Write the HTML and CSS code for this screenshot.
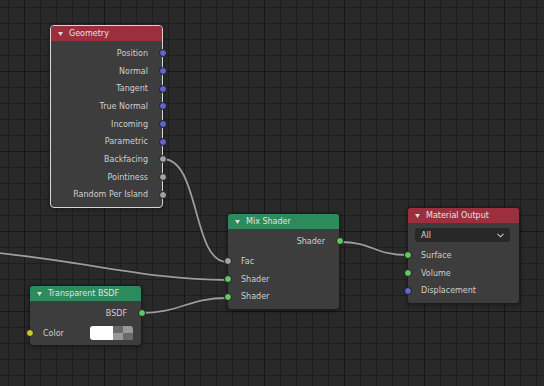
FILE: index.html
```html
<!DOCTYPE html>
<html lang="en">
<head>
  <meta charset="UTF-8">
  <title>Shader Editor</title>
  <link rel="stylesheet" href="styles.css">
</head>
<body>
  <div class="editor">
    <svg class="links" width="544" height="386" viewBox="0 0 544 386">
      <g class="wire-back">
        <path d="M163,159 C200,159 192,262 227,262"/>
        <path d="M-10,252 C90,262 150,280 227,280"/>
        <path d="M141,313 C180,313 188,298 227,298"/>
        <path d="M340,242 C374,242 373,255 407,255"/>
      </g>
      <g class="wire">
        <path d="M163,159 C200,159 192,262 227,262"/>
        <path d="M-10,252 C90,262 150,280 227,280"/>
        <path d="M141,313 C180,313 188,298 227,298"/>
        <path d="M340,242 C374,242 373,255 407,255"/>
      </g>
    </svg>

    <!-- Geometry -->
    <div class="node node-geometry active">
      <div class="node-header red">
        <svg class="collapse" width="5" height="4" viewBox="0 0 5 4"><polygon points="0,0 5,0 2.5,4"/></svg>
        <span>Geometry</span>
      </div>
      <div class="node-body">
        <div class="row out">Position<i class="socket vector"></i></div>
        <div class="row out">Normal<i class="socket vector"></i></div>
        <div class="row out">Tangent<i class="socket vector"></i></div>
        <div class="row out">True Normal<i class="socket vector"></i></div>
        <div class="row out">Incoming<i class="socket vector"></i></div>
        <div class="row out">Parametric<i class="socket vector"></i></div>
        <div class="row out">Backfacing<i class="socket float"></i></div>
        <div class="row out">Pointiness<i class="socket float"></i></div>
        <div class="row out">Random Per Island<i class="socket float"></i></div>
      </div>
    </div>

    <!-- Mix Shader -->
    <div class="node node-mix">
      <div class="node-header green">
        <svg class="collapse" width="5" height="4" viewBox="0 0 5 4"><polygon points="0,0 5,0 2.5,4"/></svg>
        <span>Mix Shader</span>
      </div>
      <div class="node-body">
        <div class="row out">Shader<i class="socket shader"></i></div>
        <div class="row in gap">Fac<i class="socket float"></i></div>
        <div class="row in">Shader<i class="socket shader"></i></div>
        <div class="row in">Shader<i class="socket shader"></i></div>
      </div>
    </div>

    <!-- Material Output -->
    <div class="node node-output">
      <div class="node-header red">
        <svg class="collapse" width="5" height="4" viewBox="0 0 5 4"><polygon points="0,0 5,0 2.5,4"/></svg>
        <span>Material Output</span>
      </div>
      <div class="node-body">
        <div class="row">
          <div class="dropdown">
            <span>All</span>
            <svg width="7" height="5" viewBox="0 0 7 5"><polyline points="0.5,0.8 3.5,3.8 6.5,0.8"/></svg>
          </div>
        </div>
        <div class="row in gap">Surface<i class="socket shader"></i></div>
        <div class="row in">Volume<i class="socket shader"></i></div>
        <div class="row in">Displacement<i class="socket vector"></i></div>
      </div>
    </div>

    <!-- Transparent BSDF -->
    <div class="node node-transparent">
      <div class="node-header green">
        <svg class="collapse" width="5" height="4" viewBox="0 0 5 4"><polygon points="0,0 5,0 2.5,4"/></svg>
        <span>Transparent BSDF</span>
      </div>
      <div class="node-body">
        <div class="row out">BSDF<i class="socket shader"></i></div>
        <div class="row in gap">Color<i class="socket color"></i>
          <div class="swatch"><span class="swatch-solid"></span><span class="swatch-alpha"></span></div>
        </div>
      </div>
    </div>
  </div>
</body>
</html>
```

FILE: styles.css
```css
body {
    margin: 0;
    background: #282828;
    font-family: "DejaVu Sans", sans-serif;
}

/* node editor canvas with grid */
.editor {
    position: relative;
    width: 544px;
    height: 386px;
    overflow: hidden;
    background-color: #292929;
    background-image:
        linear-gradient(to right, #171717 1px, transparent 1px),
        linear-gradient(to bottom, #171717 1px, transparent 1px),
        linear-gradient(to right, #1e1e1e 1px, transparent 1px),
        linear-gradient(to bottom, #1e1e1e 1px, transparent 1px);
    background-size: 80px 80px, 80px 80px, 16px 16px, 16px 16px;
    background-position: 24px 0, 0 71px, 8px 0, 0 7px;
}

.links {
    position: absolute;
    left: 0;
    top: 0;
}

.links path {
    fill: none;
}

.wire-back path {
    stroke: #232323;
    stroke-width: 3.5;
}

.wire path {
    stroke: #9c9c9c;
    stroke-width: 1.8;
}

/* nodes */
.node {
    position: absolute;
    width: 113px;
    box-sizing: border-box;
    background: #3d3d3d;
    border: 1px solid #1c1c1c;
    border-radius: 4px;
    box-shadow: 0 1px 4px rgba(0, 0, 0, 0.45);
    font-size: 8px;
    color: #cfcfcf;
}

.node.active {
    border-color: #d6d6d6;
}

.node-geometry {
    left: 50px;
    top: 25px;
}

.node-mix {
    left: 227px;
    top: 213px;
}

.node-output {
    left: 407px;
    top: 207px;
}

.node-transparent {
    left: 29px;
    top: 285px;
}

.node-header {
    height: 15px;
    display: flex;
    align-items: center;
    gap: 6px;
    padding-left: 7px;
    border-radius: 3px 3px 0 0;
    color: #e2e2e2;
}

.node-header.red {
    background: #9d2f3d;
}

.node-header.green {
    background: #2c8a5b;
}

.collapse polygon {
    fill: #dddddd;
}

.node-body {
    padding: 3.5px 0 3px;
}

.row {
    position: relative;
    height: 17.7px;
    display: flex;
    align-items: center;
}

.row.out {
    justify-content: flex-end;
    padding-right: 14px;
}

.row.in {
    padding-left: 13px;
}

.row.gap {
    margin-top: 2.3px;
}

/* sockets sit on the node edge */
.socket {
    position: absolute;
    top: calc(50% - 4px);
    width: 8px;
    height: 8px;
    box-sizing: border-box;
    border-radius: 50%;
    border: 1px solid #1e1e1e;
}

.row.out .socket {
    right: -4.5px;
}

.row.in .socket {
    left: -4.5px;
}

.socket.vector {
    background: #6464cc;
}

.socket.float {
    background: #a3a3a3;
}

.socket.shader {
    background: #62c962;
}

.socket.color {
    background: #c8c82a;
}

.dropdown {
    display: flex;
    align-items: center;
    justify-content: space-between;
    width: 95px;
    height: 14px;
    margin-left: 7px;
    padding: 0 6px;
    box-sizing: border-box;
    background: #282828;
    border-radius: 3px;
    color: #d8d8d8;
}

.dropdown polyline {
    fill: none;
    stroke: #c8c8c8;
    stroke-width: 1.1;
}

.swatch {
    display: flex;
    margin-left: auto;
    margin-right: 8px;
    width: 43px;
    height: 14px;
    border-radius: 3px;
    overflow: hidden;
}

.swatch-solid {
    flex: 1;
    background: #ffffff;
}

.swatch-alpha {
    width: 20px;
    background-color: #999999;
    background-image:
        linear-gradient(#6a6a6a, #6a6a6a),
        linear-gradient(#6a6a6a, #6a6a6a);
    background-size: 10px 7px, 10px 7px;
    background-position: 0 0, 10px 7px;
    background-repeat: no-repeat;
}
```
